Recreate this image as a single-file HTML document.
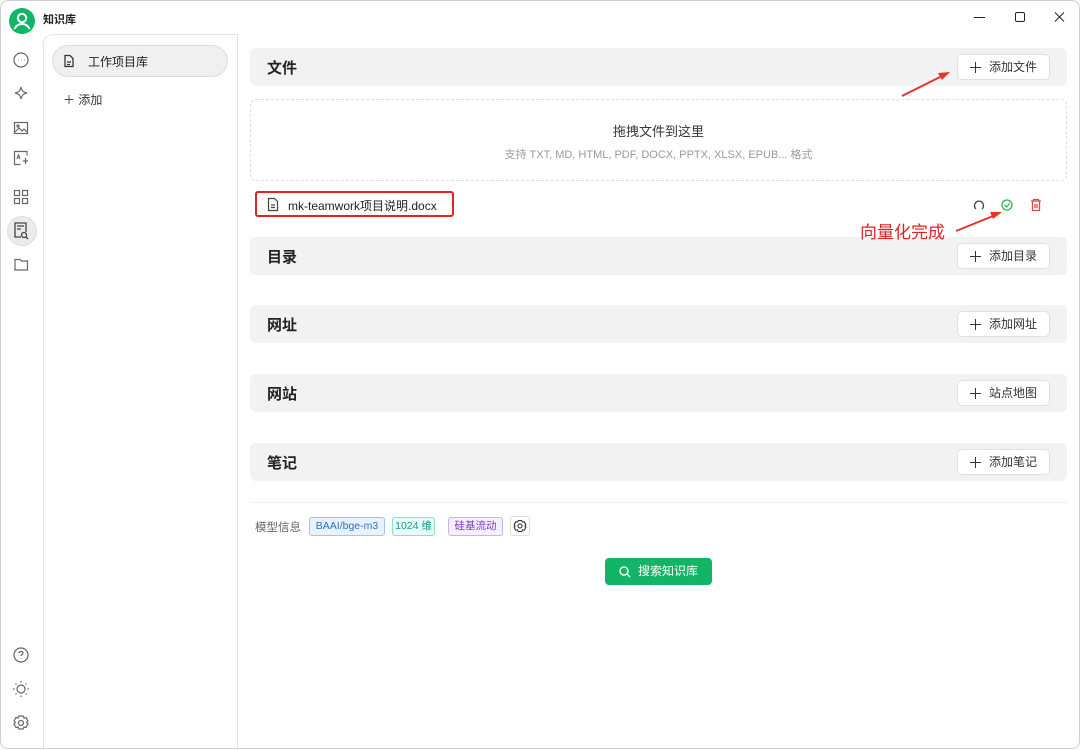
<!DOCTYPE html>
<html><head><meta charset="utf-8"><style>
*{box-sizing:border-box;margin:0;padding:0}
body{width:1080px;height:749px;background:#fff;font-family:"Liberation Sans","Noto Sans CJK SC",sans-serif;position:relative;overflow:hidden;color:#222}
.abs{position:absolute}
.win{position:absolute;left:0;top:0;width:1080px;height:749px;border:1px solid #cfcfcf;border-radius:8px;background:#fff}
.side{left:43px;top:34px;width:195px;height:716px;border:1px solid #e3e3e3;border-top-left-radius:10px;border-bottom:none}
.bar{position:absolute;left:250px;width:817px;height:38px;background:#f2f2f2;border-radius:6px}
.bar .t{position:absolute;left:17px;top:9px;font-size:15px;font-weight:bold;color:#222}
.bar .b{position:absolute;right:17px;top:6px;height:26px;width:93px;background:#fff;border:1px solid #e0e0e0;border-radius:5px;font-size:12px;color:#333;line-height:24px;padding-left:31px}
.bar .b:before{content:"";position:absolute;left:12px;top:12px;width:11px;height:1.3px;background:#333}
.bar .b:after{content:"";position:absolute;left:17px;top:7px;width:1.3px;height:11px;background:#333}
.tag{position:absolute;top:517px;height:19px;font-size:10.5px;line-height:17px;border-radius:3px;border:1px solid;text-align:center;white-space:nowrap}
</style></head><body>
<div class="win"></div>
<div class="abs" style="left:9px;top:8px;width:26px;height:26px;border-radius:50%;background:#12b565">
<svg width="26" height="26" viewBox="0 0 26 26"><circle cx="13" cy="10" r="4.2" fill="none" stroke="#fff" stroke-width="2"/><path d="M5.5 21c1.5-3.5 4-5 7.5-5s6 1.5 7.5 5" fill="none" stroke="#fff" stroke-width="2"/></svg></div>
<div class="abs" style="left:43px;top:11px;font-size:11px;font-weight:bold">知识库</div>
<svg class="abs" style="left:965px;top:10px" width="100" height="16"><path d="M9 7.5h11" stroke="#222"/><rect x="50.5" y="2.5" width="9" height="9" rx="1.5" fill="none" stroke="#222"/><path d="M90 2.5l9 9M99 2.5l-9 9" stroke="#222"/></svg>
<div class="abs side"></div>
<svg class="abs" style="left:0;top:40px" width="43" height="700" fill="none" stroke="#666" stroke-width="1.2">
<circle cx="21" cy="20" r="7"/><path d="M18 20h.5M21 20h.5M24 20h.5"/>
<path d="M21 47c1 4 2 5 6 6-4 1-5 2-6 6-1-4-2-5-6-6 4-1 5-2 6-6z"/>
<rect x="14.5" y="82.5" width="13" height="11"/><path d="M15 92l4-4 3 3 2-2 3 3"/><circle cx="18" cy="86" r="1"/>
<path d="M27 115.5v-4h-12.5v13h6"/><path d="M17 119l1.5-4 1.5 4M23 121h5M25.5 118v6"/>
<rect x="14.5" y="150.5" width="5" height="5"/><rect x="22.5" y="150.5" width="5" height="5"/><rect x="14.5" y="158.5" width="5" height="5"/><rect x="22.5" y="158.5" width="5" height="5"/>
<path d="M15 219.5h5l1.5 1.5h6v9h-12.5z"/>
<circle cx="21" cy="615" r="7"/><path d="M19 613c0-2 4-2 4 0s-2 1.5-2 3M21 618.5v.5"/>
<circle cx="21" cy="649" r="4"/><path d="M21 641v1.5M21 655.5v1.5M13 649h1.5M27.5 649h1.5M15.5 643.5l1 1M25.5 653.5l1 1M15.5 654.5l1-1M25.5 644.5l1-1"/>
<circle cx="21" cy="683" r="2.5"/><path d="M19 676h4l1 2 2-.5 2 3.5-1.5 1.5 1.5 1.5-2 3.5-2-.5-1 2h-4l-1-2-2 .5-2-3.5 1.5-1.5-1.5-1.5 2-3.5 2 .5z"/>
</svg>
<div class="abs" style="left:7px;top:216px;width:30px;height:30px;border-radius:50%;background:#ececec;border:1px solid #ddd"></div>
<svg class="abs" style="left:0;top:216px" width="43" height="30" fill="none" stroke="#444" stroke-width="1.3"><path d="M26 16v-9h-11v14h6M17 10h7M17 13h4"/><circle cx="24" cy="19" r="2.5"/><path d="M26 21l2 2"/></svg>
<div class="abs" style="left:52px;top:45px;width:176px;height:32px;background:#f0f0f0;border:1px solid #ddd;border-radius:16px"></div>
<svg class="abs" style="left:62px;top:54px" width="14" height="14" fill="none" stroke="#333" stroke-width="1.3"><path d="M3 1.5h5l3 3v8h-8z M5 8h4M5 10.5h3"/></svg>
<div class="abs" style="left:88px;top:53px;font-size:12px;color:#222">工作项目库</div>
<div class="abs" style="left:63px;top:91px;font-size:12px;color:#333">＋ 添加</div>
<div class="abs" style="left:237px;top:34px;width:1px;height:716px;background:#e3e3e3"></div>
<div class="bar" style="top:48px"><div class="t">文件</div><div class="b">添加文件</div></div>
<div class="abs" style="left:250px;top:99px;width:817px;height:82px;border:1px dashed #ddd;border-radius:6px"></div>
<div class="abs" style="left:250px;top:121px;width:817px;text-align:center;font-size:13px;color:#333">拖拽文件到这里</div>
<div class="abs" style="left:250px;top:146px;width:817px;text-align:center;font-size:11px;color:#999">支持 TXT, MD, HTML, PDF, DOCX, PPTX, XLSX, EPUB... 格式</div>
<div class="abs" style="left:255px;top:191px;width:199px;height:26px;border:2px solid #e02424;border-radius:3px"></div>
<svg class="abs" style="left:266px;top:197px" width="14" height="15" fill="none" stroke="#444" stroke-width="1.2"><path d="M2.5 1.5h6l3 3v9h-9z M5 8h4M5 10.5h4"/></svg>
<div class="abs" style="left:288px;top:197px;font-size:12px;color:#222">mk-teamwork项目说明.docx</div>
<svg class="abs" style="left:970px;top:197px" width="76" height="18" fill="none" stroke-width="1.3"><path d="M6 12a4.5 4.5 0 1 1 6 0" stroke="#444"/><circle cx="37" cy="8" r="5" stroke="#33b34a"/><path d="M34.5 8l2 2 3-3.5" stroke="#33b34a"/><path d="M61 4h10M63.5 4v-1.5h5V4M62.5 4v9.5h7V4M65 7v4M67 7v4" stroke="#e04848"/></svg>
<div class="bar" style="top:237px"><div class="t">目录</div><div class="b">添加目录</div></div>
<div class="bar" style="top:305px"><div class="t">网址</div><div class="b">添加网址</div></div>
<div class="bar" style="top:374px"><div class="t">网站</div><div class="b">站点地图</div></div>
<div class="bar" style="top:443px"><div class="t">笔记</div><div class="b">添加笔记</div></div>
<div class="abs" style="left:860px;top:218px;font-size:17px;color:#e02424;z-index:5">向量化完成</div>
<svg class="abs" style="left:890px;top:60px;z-index:5" width="120" height="180"><path d="M12 36L58 13" stroke="#e8332a" stroke-width="2"/><path d="M60 12l-12 1 4 7z" fill="#e8332a"/><path d="M66 171L108 154" stroke="#e8332a" stroke-width="2"/><path d="M112 152l-12 0 3 7z" fill="#e8332a"/></svg>
<div class="abs" style="left:250px;top:502px;width:817px;height:1px;background:#eee"></div>
<div class="abs" style="left:255px;top:519px;font-size:11.5px;color:#666">模型信息</div>
<div class="tag" style="left:309px;width:76px;background:#e8f3ff;border-color:#9cc7f5;color:#2a6fc9">BAAI/bge-m3</div>
<div class="tag" style="left:392px;width:43px;background:#e8fbf9;border-color:#8ddcd6;color:#1a9a90">1024 维</div>
<div class="tag" style="left:448px;width:55px;background:#f6efff;border-color:#cdb0f0;color:#7a3fc5">硅基流动</div>
<div class="abs" style="left:510px;top:516px;width:20px;height:20px;border:1px solid #ddd;border-radius:3px"></div>
<svg class="abs" style="left:510px;top:516px" width="20" height="20" fill="none" stroke="#333" stroke-width="1.1"><circle cx="10" cy="10" r="2"/><path d="M8.3 4.5h3.4l.8 1.5 1.7-.3 1.7 3-1 1.3 1 1.3-1.7 3-1.7-.3-.8 1.5H8.3l-.8-1.5-1.7.3-1.7-3 1-1.3-1-1.3 1.7-3 1.7.3z"/></svg>
<div class="abs" style="left:605px;top:558px;width:107px;height:27px;background:#12b565;border-radius:4px;color:#fff;font-size:12px;line-height:27px;padding-left:33px">搜索知识库</div>
<svg class="abs" style="left:618px;top:565px" width="14" height="14" fill="none" stroke="#fff" stroke-width="1.4"><circle cx="6" cy="6" r="4"/><path d="M9 9l3 3"/></svg>
</body></html>
